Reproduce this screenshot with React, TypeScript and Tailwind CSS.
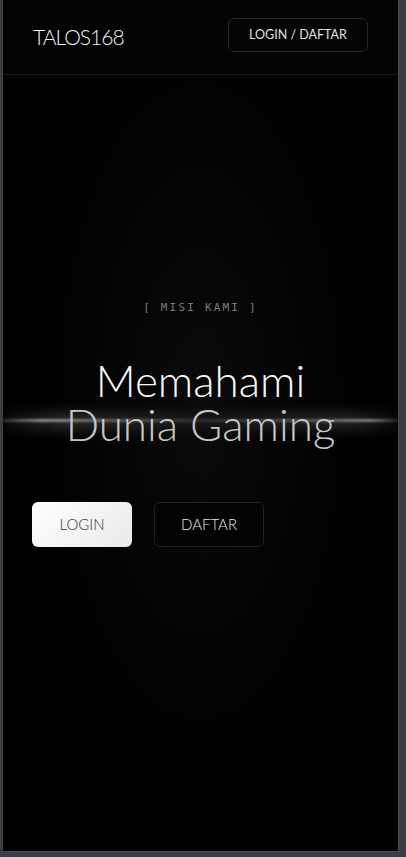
export default function App() {
  return (
    <div className="flex h-[857px] w-full bg-[#3a3d44] pb-[5px] pl-[3px] pr-[7px]">
      <div className="flex flex-1 flex-col overflow-hidden border-b border-r border-[#4a4d54] bg-black font-['Lato',sans-serif]">
        {/* Header */}
        <header className="flex h-[75px] shrink-0 items-center justify-between border-b border-[#1c1c1c] bg-[#030303] pl-[30px] pr-[30px]">
          <span className="text-[21px] font-light tracking-[-1px] text-[#f2f2f2]">TALOS168</span>
          <button className="mt-[-4px] flex h-[34px] w-[140px] items-center justify-center rounded-md border border-[#262626] bg-[#050505] text-[12.5px] text-[#e0e0e0]">
            LOGIN / DAFTAR
          </button>
        </header>

        {/* Hero */}
        <section className="relative flex-1 bg-[radial-gradient(ellipse_at_50%_42%,#0a0a0a_0%,#040404_35%,#000_60%)] px-[29px] pt-[225px]">
          {/* light streak */}
          <div className="pointer-events-none absolute left-0 right-0 top-[337px] h-[18px] bg-[linear-gradient(to_right,rgba(255,255,255,0.04),rgba(255,255,255,0.16)_15%,rgba(255,255,255,0.05)_50%,rgba(255,255,255,0.14)_88%,rgba(255,255,255,0.03))] blur-[6px]" />
          <div className="pointer-events-none absolute left-0 right-0 top-[344px] h-[3px] bg-[linear-gradient(to_right,rgba(255,255,255,0.15),rgba(255,255,255,0.5)_10%,rgba(255,255,255,0.3)_25%,rgba(255,255,255,0.1)_50%,rgba(255,255,255,0.28)_80%,rgba(255,255,255,0.45)_93%,rgba(255,255,255,0.1))] blur-[1px]" />

          <div className="relative flex flex-col items-center">
            <p className="font-['DejaVu_Sans_Mono',monospace] text-[11px] tracking-[2.2px] text-[#7c7c7c]">[ MISI KAMI ]</p>
            <h1 className="mt-[41px] text-center text-[44px] font-light leading-[44px]">
              <span className="block text-[#f7f7f7]">Memahami</span>
              <span className="block text-[#c6c6c6]">Dunia Gaming</span>
            </h1>
          </div>

          <div className="relative mt-[56px] flex gap-[22px]">
            <button className="flex h-[45px] w-[100px] items-center justify-center rounded-md bg-[linear-gradient(135deg,#ffffff,#e9e9e9)] text-[15px] font-light text-[#333]">
              LOGIN
            </button>
            <button className="flex h-[45px] w-[110px] items-center justify-center rounded-md border border-[#222] bg-[#030303] text-[15px] font-light text-[#e6e6e6]">
              DAFTAR
            </button>
          </div>
        </section>
      </div>
    </div>
  );
}
